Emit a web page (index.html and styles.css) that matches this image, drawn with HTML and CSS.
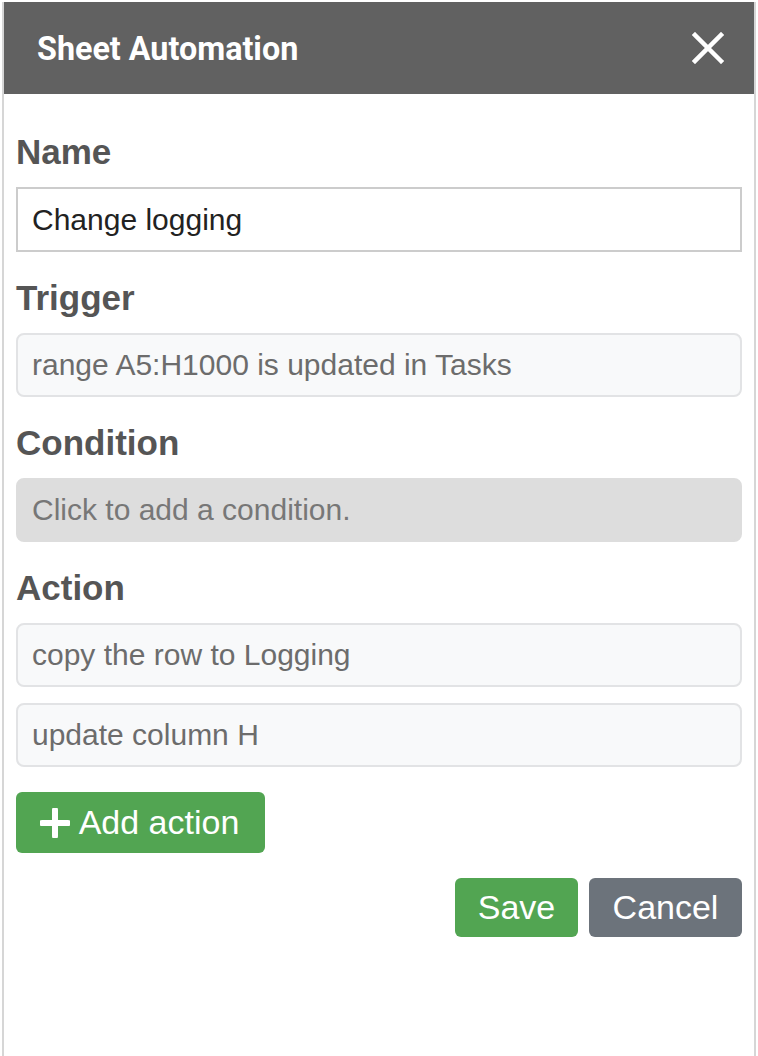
FILE: index.html
```html
<!DOCTYPE html>
<html>
<head>
<meta charset="utf-8">
<link rel="stylesheet" href="styles.css">
</head>
<body>
<div class="panel">
  <div class="header">
    <div class="title">Sheet Automation</div>
    <svg class="close" width="32" height="32" viewBox="0 0 32 32">
      <path d="M3 3 L29 29 M29 3 L3 29" stroke="#fff" stroke-width="4.5" stroke-linecap="square" fill="none"/>
    </svg>
  </div>
  <div class="content">
    <div class="label">Name</div>
    <div class="input">Change logging</div>
    <div class="label">Trigger</div>
    <div class="box">range A5:H1000 is updated in Tasks</div>
    <div class="label">Condition</div>
    <div class="box empty">Click to add a condition.</div>
    <div class="label">Action</div>
    <div class="actions">
      <div class="box">copy the row to Logging</div>
      <div class="box">update column H</div>
    </div>
    <div class="add-row">
      <div class="btn green add">
        <svg class="plus" width="30" height="30" viewBox="0 0 30 30">
          <path d="M15 2 V28 M2 15 H28" stroke="#fff" stroke-width="6" stroke-linecap="round" fill="none"/>
        </svg>
        <span>Add action</span>
      </div>
    </div>
    <div class="footer">
      <div class="btn green save">Save</div>
      <div class="btn gray cancel">Cancel</div>
    </div>
  </div>
</div>
</body>
</html>
```
FILE: styles.css
```css
html, body {
  margin: 0;
  padding: 0;
  background: #fff;
  height: 100%;
}
body {
  padding: 2px 2px 0 2px;
  box-sizing: border-box;
  font-family: "Liberation Sans", Arial, sans-serif;
}
.panel {
  height: 100%;
  border-left: 2px solid #d6d6d6;
  border-right: 2px solid #d6d6d6;
  box-sizing: border-box;
}
.header {
  height: 92px;
  background: #616161;
  display: flex;
  align-items: center;
  justify-content: space-between;
  padding: 0 30px 0 33px;
}
.title {
  font-family: Roboto, "Liberation Sans", sans-serif;
  font-weight: 700;
  font-size: 32.3px;
  color: #fff;
  padding-top: 2px;
}
.close {
  display: block;
}
.content {
  padding: 12px 12px 0 12px;
}
.label {
  font-size: 35px;
  font-weight: 700;
  color: #555;
  line-height: 40px;
  margin: 26px 0 15px 0;
}
.input {
  height: 65px;
  box-sizing: border-box;
  border: 2px solid #cccccc;
  display: flex;
  align-items: center;
  padding: 0 14px;
  font-size: 30px;
  color: #222;
  margin-bottom: 1px;
}
.box {
  height: 64px;
  box-sizing: border-box;
  border: 2px solid #e2e3e5;
  border-radius: 8px;
  background: #f8f9fa;
  display: flex;
  align-items: center;
  padding: 0 14px;
  font-size: 30px;
  color: #6c6c6c;
}
.box.empty {
  background: #dddddd;
  border-color: #dddddd;
  color: #777;
}
.actions {
  display: flex;
  flex-direction: column;
  gap: 16px;
}
.add-row {
  display: flex;
  margin-top: 25px;
}
.btn {
  display: flex;
  align-items: center;
  justify-content: center;
  color: #fff;
  font-size: 34px;
  border-radius: 6px;
  box-sizing: border-box;
}
.green {
  background: #52a552;
}
.gray {
  background: #6c737b;
}
.add {
  width: 249px;
  height: 61px;
  gap: 9px;
  padding-right: 2px;
}
.plus {
  display: block;
}
.footer {
  display: flex;
  justify-content: flex-end;
  gap: 11px;
  margin-top: 25px;
}
.save {
  width: 123px;
  height: 59px;
}
.cancel {
  width: 153px;
  height: 59px;
}
```
